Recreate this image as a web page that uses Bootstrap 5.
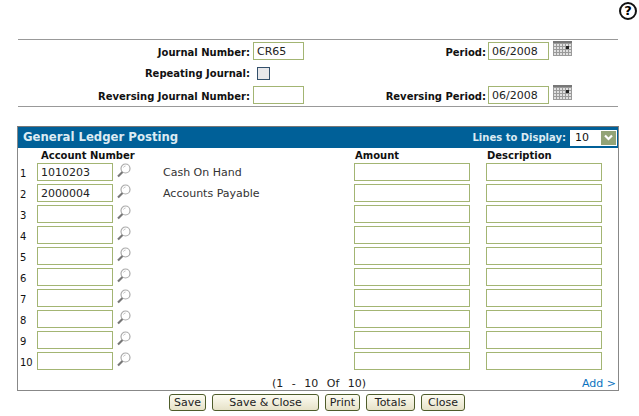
<!DOCTYPE html>
<html lang="en">
<head>
  <meta charset="UTF-8" />
  <meta name="viewport" content="width=device-width, initial-scale=1.0"/>
  <title>General Ledger Posting</title>
  <link href="https://cdn.jsdelivr.net/npm/bootstrap@5.3.0/dist/css/bootstrap.min.css" rel="stylesheet"/>
  <style>
    body { font-family: "DejaVu Sans", Verdana, sans-serif; font-size: 10px; color: #000; background: #fff; line-height: 1.2; }
    .page-wrap { width: 639px; height: 416px; overflow: hidden; }
    .help-bar { height: 39px; padding: 2px 2px 0 0; }
    .help-icon { width: 18px; height: 18px; border: 2px solid #111; border-radius: 50%; font-size: 13px; font-weight: 700; line-height: 14px; text-align: center; }
    .head-form { margin: 0 21px 0 18px; height: 68px; border-top: 1px solid #999; border-bottom: 1px solid #999; padding-top: 2px;
      display: grid; grid-template-columns: 232px 54px 184px 61px 23px; grid-auto-rows: 22px; column-gap: 0; }
    .lbl { font-weight: 700; color: #111; text-align: right; align-self: center; }
    .lbl-period { padding-right: 2px; }
    .lbl-repeat { margin-top: -2px; }
    .fld { border: 1px solid #a3b573; background: #fff; border-radius: 0; height: 18px; padding: 0 3px; font-size: 11px; font-family: inherit; color: #222; outline: 0; min-width: 0; }
    .fld-journal { width: 51px; margin-left: 3px; }
    .fld-period { width: 61px; }
    .fld-acct { width: 76px; }
    .fld-wide { width: 116px; }
    .cal-icon { margin: -1px 0 0 4px; }
    .repeat-box { width: 13px; height: 13px; margin: -3px 0 0 7px; border: 1px solid #33506b; background: #e8e8ea; align-self: center; }
    .gl-panel { margin: 19px 20px 0 17px; height: 265px; border: 1px solid #888; border-top-color: #777; position: relative; }
    .gl-head { height: 21px; background: #006098; color: #dcebf3; padding: 0 1px 0 5px; }
    .gl-title { font-size: 11.7px; font-weight: 700; }
    .lines-lbl { font-size: 10px; font-weight: 700; margin-right: 4px; }
    .lines-sel { width: 47px; height: 16px; background: #fff; color: #111; padding: 0 1px 0 5px; font-size: 11px; }
    .sel-btn { width: 15px; height: 14px; background: #93a477; }
    .gl-row { display: grid; grid-template-columns: 19px 76px 50px 191px 132px 116px; height: 21px; align-items: start; }
    .gl-caps { height: 15px; padding-top: 2px; font-weight: 700; color: #111; }
    .gl-caps > :nth-child(2) { white-space: nowrap; margin-left: 4px; }
    .gl-caps > :nth-child(5), .gl-caps > :nth-child(6) { margin-left: 1px; }
    .row-no { padding: 5px 0 0 2px; color: #111; }
    .acct-name { padding-top: 3px; color: #333; font-size: 11px; }
    .look { margin: 0 0 0 4px; }
    .gl-foot { padding: 4px 2px 0 254px; font-size: 11px; }
    .gl-foot a { color: #0a72c0; text-decoration: none; }
    .pg-info { word-spacing: 5px; color: #222; }
    .act-bar { margin: 3px 0 0 169px; gap: 6px; }
    .btn-act { height: 17px; padding: 0; font-size: 11px; line-height: 14px; color: #222; border: 1px solid #4e5c2a; border-radius: 3px; background: linear-gradient(#fdfcf2, #e6e2c8); }
    .btn-act:hover { color: #222; border-color: #4e5c2a; background: #e6e2c8; }
    .btn-save { width: 37px; }
    .btn-save-close { width: 107px; }
    .btn-print { width: 35px; }
    .btn-totals { width: 49px; }
    .btn-close-form { width: 44px; }
  </style>
</head>
<body>
  <div class="page-wrap">
    <div class="help-bar d-flex justify-content-end">
      <div class="help-icon">?</div>
    </div>

    <!-- Journal header -->
    <form class="head-form">
      <label class="lbl">Journal Number:</label>
      <input class="fld fld-journal" type="text" value="CR65">
      <label class="lbl lbl-period">Period:</label>
      <input class="fld fld-period" type="text" value="06/2008">
      <svg class="cal-icon" width="19" height="15" viewBox="0 0 19 15"><use href="#cal"/></svg>

      <label class="lbl lbl-repeat">Repeating Journal:</label>
      <div class="repeat-box"></div>
      <div></div><div></div><div></div>

      <label class="lbl">Reversing Journal Number:</label>
      <input class="fld fld-journal" type="text">
      <label class="lbl lbl-period">Reversing Period:</label>
      <input class="fld fld-period" type="text" value="06/2008">
      <svg class="cal-icon" width="19" height="15" viewBox="0 0 19 15"><use href="#cal"/></svg>
    </form>

    <!-- Posting lines -->
    <div class="gl-panel">
      <div class="gl-head d-flex align-items-center justify-content-between">
        <span class="gl-title">General Ledger Posting</span>
        <div class="d-flex align-items-center">
          <span class="lines-lbl">Lines to Display:</span>
          <div class="lines-sel d-flex align-items-center justify-content-between">
            <span>10</span>
            <span class="sel-btn d-flex align-items-center justify-content-center">
              <svg width="9" height="7" viewBox="0 0 9 7"><path d="M1 1.5 4.5 5 8 1.5" fill="none" stroke="#fff" stroke-width="2.2"/></svg>
            </span>
          </div>
        </div>
      </div>
      <div id="glBody">
        <div class="gl-row gl-caps">
          <span></span><span>Account Number</span><span></span><span></span><span>Amount</span><span>Description</span>
        </div>
      </div>
      <div class="gl-foot d-flex justify-content-between">
        <span class="pg-info">(1 - 10 Of 10)</span>
        <a href="#">Add &gt;</a>
      </div>
    </div>

    <div class="act-bar d-flex">
      <button type="button" class="btn btn-act btn-save">Save</button>
      <button type="button" class="btn btn-act btn-save-close">Save &amp; Close</button>
      <button type="button" class="btn btn-act btn-print">Print</button>
      <button type="button" class="btn btn-act btn-totals">Totals</button>
      <button type="button" class="btn btn-act btn-close-form">Close</button>
    </div>
  </div>

  <svg width="0" height="0" class="position-absolute">
    <defs>
      <g id="cal">
        <rect width="19" height="15" fill="#e0e0e0"/>
        <rect width="19" height="2" fill="#777"/>
        <path d="M.5 2v13M3.5 2v13M6.5 2v13M9.5 2v13M12.5 2v13M15.5 2v13M18.5 2v13M0 2.500h19M0 5.500h19M0 8.500h19M0 11.500h19M0 14.500h19" stroke="#9a9a9a" stroke-width="1" fill="none"/>
        <rect x="13" y="5" width="3" height="3" fill="#222"/>
      </g>
      <g id="lens">
        <circle cx="8.500" cy="5.500" r="4.500" fill="#fff" stroke="#aaa" stroke-width="1.200"/>
        <path d="M5.500 9 1 13.500" stroke="#777" stroke-width="2.200"/>
        <path d="M6.500 4.500a2.500 2.500 0 0 1 2-1.500" stroke="#bbb" fill="none"/>
      </g>
    </defs>
  </svg>

  <script src="https://cdn.jsdelivr.net/npm/bootstrap@5.3.0/dist/js/bootstrap.bundle.min.js"></script>
  <script>
    // Two lines are filled in, the rest stay empty
    const lines = [['1010203', 'Cash On Hand'], ['2000004', 'Accounts Payable']];
    const glBody = document.getElementById('glBody');
    for (let i = 0; i < 10; i++) {
      const line = lines[i] || ['', ''];
      glBody.insertAdjacentHTML('beforeend', `
        <div class="gl-row">
          <span class="row-no">${i + 1}</span>
          <input class="fld fld-acct" type="text" value="${line[0]}">
          <svg class="look" width="14" height="15" viewBox="0 0 14 15"><use href="#lens"/></svg>
          <span class="acct-name">${line[1]}</span>
          <input class="fld fld-wide" type="text">
          <input class="fld fld-wide" type="text">
        </div>`);
    }
  </script>
</body>
</html>
